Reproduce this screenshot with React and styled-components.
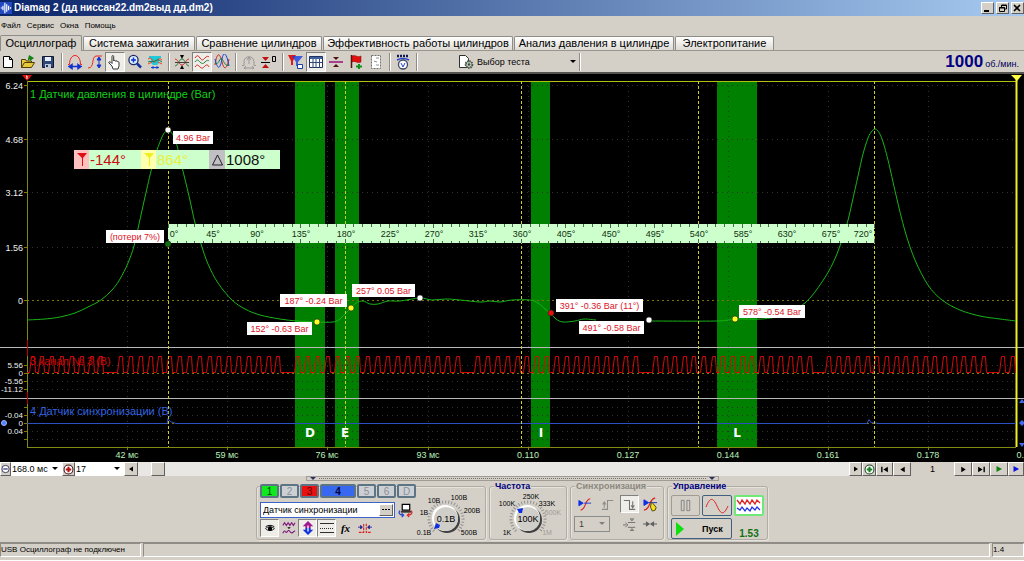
import { useState } from "react";
import styled, { createGlobalStyle, css } from "styled-components";

const GlobalStyle = createGlobalStyle`
  * {
    box-sizing: border-box;
  }
  body {
    margin: 0;
    background: #d4d0c8;
    font-family: "Liberation Sans", Arial, sans-serif;
    font-size: 9px;
    color: #000;
  }
  button, input, select {
    font: inherit;
    color: inherit;
    margin: 0;
    padding: 0;
    border-radius: 0;
  }
`;

const raised = css`
  border: 1px solid;
  border-color: #fff #606060 #606060 #fff;
  background: #d4d0c8;
`;

const Window = styled.div`
  display: flex;
  flex-direction: column;
  overflow: hidden;
`;

/* title and menu */

const TitleBar = styled.header`
  display: flex;
  align-items: center;
  gap: 2px;
  height: 16px;
  background: linear-gradient(to right, #0a246a, #a6caf0);
`;

const Title = styled.h1`
  flex: 1;
  margin: 0;
  font-size: 10px;
  line-height: 16px;
  font-weight: bold;
  color: #fff;
`;

const WindowButton = styled.button`
  ${raised}
  display: flex;
  width: 13px;
  height: 12px;
`;

const Menu = styled.nav`
  display: flex;
  gap: 6px;
  height: 19px;
  padding-left: 1px;
`;

const MenuItem = styled.button`
  border: 0;
  background: none;
  font-size: 8px;
  line-height: 20px;
`;

const Tabs = styled.nav`
  display: flex;
  align-items: flex-end;
  gap: 1px;
  height: 16px;
  border-bottom: 1px solid #9a968e;
`;

const Tab = styled.button`
  height: ${(props) => (props.$active ? 16 : 14)}px;
  width: ${(props) => props.$width}px;
  margin-bottom: ${(props) => (props.$active ? -1 : 0)}px;
  border: 1px solid #8c8c88;
  border-bottom: 0;
  border-radius: 2px 2px 0 0;
  background: ${(props) => (props.$active ? "#d4d0c8" : "linear-gradient(#fff, #dedbd4)")};
  font-size: 11px;
  line-height: 13px;
  white-space: nowrap;
`;

/* toolbar */

const Toolbar = styled.div`
  display: flex;
  align-items: center;
  height: 23px;
  margin-left: -2px;
  border-bottom: 2px solid #55534f;
`;

const ToolButton = styled.button`
  display: flex;
  align-items: center;
  justify-content: center;
  width: 20px;
  height: 20px;
  border: 1px solid;
  border-color: ${(props) => (props.$on ? "#808080 #fff #fff #808080" : "transparent")};
  background: ${(props) => (props.$on ? "#efede8" : "none")};
`;

const Separator = styled.span`
  width: 4px;
  height: 18px;
  margin-left: 3px;
  border-left: 1px solid #8f8c85;
  box-shadow: inset 1px 0 #fff;
`;

const TestButton = styled.button`
  display: flex;
  align-items: center;
  gap: 3px;
  width: 118px;
  margin-left: 38px;
  border: 0;
  background: none;
  span {
    flex: 1;
    text-align: left;
  }
`;

const Rpm = styled.output`
  margin-left: auto;
  padding-right: 5px;
  font-size: 9px;
  color: #00005c;
  b {
    margin-right: 2px;
    font-size: 17px;
    color: #000080;
  }
`;

/* chart */

const ChartSvg = styled.svg`
  display: block;
  width: 100%;
  height: auto;
  background: #000;
`;

const AxisText = styled.text`
  font-size: ${(props) => (props.$small ? 8 : 9)}px;
  fill: ${(props) => props.$color || "#f0f0f0"};
  text-anchor: ${(props) => props.$anchor || "end"};
`;

const ChannelText = styled.text`
  font-size: 11px;
  fill: ${(props) => props.$color};
`;

const TagText = styled.text`
  font-size: 9px;
  fill: #dc1428;
  text-anchor: middle;
`;

const RulerText = styled.text`
  font-size: 9px;
  fill: #103010;
  text-anchor: middle;
`;

const ReadoutText = styled.text`
  font-size: 15px;
  fill: ${(props) => props.$color};
`;

const BandText = styled.text`
  font-family: "DejaVu Sans", sans-serif;
  font-size: 12px;
  font-weight: bold;
  fill: #fff;
  text-anchor: middle;
`;

/* scroll row */

const ScrollRow = styled.div`
  display: flex;
  height: 14px;
`;

const SmallButton = styled.button`
  ${raised}
  display: flex;
  align-items: center;
  justify-content: center;
  width: ${(props) => props.$width}px;
  flex: none;
`;

const Combo = styled.label`
  position: relative;
  flex: none;
  width: ${(props) => props.$width}px;
  height: ${(props) => props.$height || 14}px;
  background: ${(props) => (props.$gray ? "#d4d0c8" : "#fff")};
  border: ${(props) => (props.$gray ? "1px solid #8c8c88" : "0")};
  select {
    display: block;
    width: 100%;
    height: 100%;
    padding-left: ${(props) => (props.$gray ? 4 : 1)}px;
    border: 0;
    background: none;
    appearance: none;
    font-size: 9px;
  }
  svg {
    position: absolute;
    right: 4px;
    top: 50%;
    margin-top: -2px;
    pointer-events: none;
  }
`;

const Track = styled.div`
  flex: 1;
  display: flex;
  padding-left: 13px;
  background: #e9e7e3;
`;

const Thumb = styled.span`
  ${raised}
  width: 14px;
`;

const PageNumber = styled.output`
  width: 43px;
  line-height: 14px;
  text-align: center;
`;

/* control panels */

const Controls = styled.main`
  display: flex;
  flex-direction: column;
  align-items: center;
  height: 66px;
`;

const Splitter = styled.div`
  display: flex;
  align-items: center;
  justify-content: space-between;
  width: 413px;
  height: 5px;
  padding: 0 3px;
  border: 1px solid #a09c94;
`;

const Dots = styled.i`
  flex: 1;
  margin: 0 3px;
  border-top: 1px dotted #707070;
`;

const Panels = styled.div`
  display: flex;
  align-items: stretch;
  gap: 3px;
  height: 58px;
  margin-top: 2px;
`;

const Group = styled.fieldset`
  position: relative;
  width: ${(props) => props.$width}px;
  height: 54px;
  margin: 3px 0 0;
  padding: 0 3px;
  border: 1px solid #b0aca4;
  border-radius: 3px;
  box-shadow: inset 1px 1px #e6e3dd, 1px 1px #e6e3dd;
`;

const GroupTitle = styled.h2`
  position: absolute;
  top: -6px;
  left: 4px;
  margin: 0;
  padding: 0 1px;
  background: #d4d0c8;
  font-size: 9px;
  line-height: 10px;
  font-weight: bold;
  color: ${(props) => props.$color || "#000080"};
`;

const ChannelGroup = styled(Group)`
  display: flex;
`;

const ChannelColumn = styled.div`
  display: flex;
  flex-direction: column;
  width: 156px;
`;

const Channels = styled.div`
  display: flex;
  gap: 1px;
  height: 14px;
  margin-top: -3px;
`;

const ChannelButton = styled.button`
  width: ${(props) => (props.$wide ? 36 : 19)}px;
  border: 2px solid #5c7484;
  border-radius: 2px;
  background: ${(props) => props.$color};
  color: ${(props) => props.$text};
  font-size: 10px;
  line-height: 9px;
  font-weight: ${(props) => (props.$wide ? "bold" : "normal")};
`;

const SensorRow = styled.div`
  display: flex;
  align-items: center;
  gap: 3px;
  margin-top: 4px;
`;

const SensorBox = styled.div`
  display: flex;
  width: 135px;
  height: 16px;
  padding: 1px;
  border: 1px solid #3c64c8;
  background: #fff;
  input {
    flex: 1;
    min-width: 0;
    padding-left: 1px;
    border: 0;
    background: none;
    font-size: 9px;
  }
`;

const ToolRow = styled.div`
  display: flex;
  margin-top: 1px;
`;

const ModeButton = styled(ToolButton)`
  width: 19px;
  height: 18px;
`;

const FunctionMark = styled.i`
  font-family: "Liberation Serif", serif;
  font-size: 11px;
  font-weight: bold;
`;

const DialSvg = styled.svg`
  display: block;
  flex: none;
`;

const DialText = styled.text`
  font-size: ${(props) => (props.$main ? 9 : 7)}px;
  fill: ${(props) => (props.$off ? "#a09c94" : "#000")};
  text-anchor: middle;
`;

const SyncGrid = styled.div`
  display: grid;
  grid-template-columns: 22px 22px 22px 20px;
  grid-template-rows: 22px 18px;
  align-items: center;
  justify-items: center;
  padding-top: 6px;
`;

const SyncCombo = styled(Combo)`
  grid-column: span 2;
  justify-self: start;
  color: #404040;
`;

const RunGrid = styled.div`
  display: grid;
  grid-template-columns: 29px 30px 30px;
  gap: 2px;
  padding-top: 8px;
`;

const RunButton = styled.button`
  display: flex;
  align-items: center;
  justify-content: center;
  gap: 18px;
  grid-column: span ${(props) => props.$span || 1};
  height: 21px;
  padding-right: ${(props) => (props.$span ? 4 : 0)}px;
  border: ${(props) => (props.$lit ? 2 : 1)}px solid ${(props) => props.$edge};
  border-radius: 2px;
  background: ${(props) => props.$fill || "#d4d0c8"};
  font-weight: bold;
  font-size: 9px;
`;

const Ratio = styled.output`
  align-self: end;
  justify-self: center;
  font-size: 10px;
  line-height: 10px;
  font-weight: bold;
  color: #107010;
`;

const Status = styled.footer`
  display: flex;
  gap: 2px;
  height: 15px;
  border-top: 1px solid #8f8c85;
`;

const Cell = styled.span`
  flex: ${(props) => (props.$width ? "none" : 1)};
  width: ${(props) => props.$width || 0}px;
  border: 1px solid;
  border-color: #8f8c85 #fff #fff #8f8c85;
  font-size: 8px;
  line-height: 12px;
  white-space: nowrap;
`;

const BottomEdge = styled.div`
  height: 4px;
  border-bottom: 1px solid #fff;
`;

// 16x16 drawings for the buttons
const icons = {
  logo: <><path fill="#2048c0" d="M0 0h16v16H0z" /><path stroke="#fff" fill="none" strokeWidth="1.6" d="M1 8h2M4 5v6M6.500 1v14M9 3v10M11.500 5v6M14 7v2" /></>,
  fresh: <path fill="#fff" stroke="#000" d="M3.500 2.500h6l3 3v8h-9zM9.500 2.500v3h3" />,
  open: <><path fill="#e8c840" stroke="#504000" d="M1.500 13.500v-8h4l1 1.500h5v2M1.500 13.500l3-5h10l-3 5z" /><path fill="#108010" d="M9 1l5 3-4 3V5L8 7V5z" /></>,
  save: <><path fill="#304878" stroke="#101830" d="M2.500 2.500h11v11h-11z" /><path fill="#e8f0ff" d="M5 3h6v4H5z" /><path fill="#c0c8d8" d="M5 10h6v4H5z" /><path fill="#203060" d="M6 11h2v2H6z" /></>,
  arch: <><path fill="none" stroke="#f02020" d="M1 10.500h1.500C2.500 5 5 1.500 8 1.500s5.500 3.500 5.500 9H15" /><path stroke="#1030d0" strokeWidth="1.500" fill="#1030d0" d="M3 12.500h10M5 10.500l-3 2 3 2zM11 10.500l3 2-3 2z" /></>,
  rise: <><path fill="none" stroke="#f02020" d="M1 14c7 0 3-11 8-12h6" /><path fill="#1030d0" stroke="#1030d0" d="M12 4v8M10 6l2-3 2 3zM10 11l2 3 2-3z" /></>,
  hand: <path fill="#fff" stroke="#202020" strokeWidth=".9" d="M6 15l-1-3-3-3c-.8-1.500 1-1.500 2-.5l1 1V2.500c0-1.300 1.700-1.300 1.700 0V7c.2-1 1.700-.9 1.800.3.300-1 1.800-.7 1.800.5.500-.7 1.700-.3 1.700 1V12l-1 3z" />,
  zoomIn: <><circle cx="6.500" cy="6" r="4.600" fill="#d8f0ff" stroke="#202860" strokeWidth="1.300" /><path stroke="#1030d0" strokeWidth="1.500" d="M4 6h5M6.500 3.500v5" /><path stroke="#1030a0" strokeWidth="2.500" d="M10 9.500l4 4" /></>,
  sphere: <><path fill="#20c8d8" d="M2 2h12v2l-2 1v4l-2 2H6L4 9V5L2 4z" /><path stroke="#f04020" fill="none" d="M1 5c4-3 5 4 7 3s4-5 7-2M1 10l4-2M15 10l-4-2" /><path stroke="#108050" fill="none" d="M1 8c3-2 4 1 7-1s4-1 7 1" /><path stroke="#1040d0" fill="none" d="M4 13.500h8M6 12v3M10 12v3" /></>,
  cross: <><path stroke="#208040" fill="none" d="M1 12c3 0 4-7 7-7s4 7 7 7" /><path stroke="#e03030" fill="none" d="M1 5c3 0 4 6 7 6s4-6 7-6" /><path stroke="#404040" d="M1 8.500h14" /><path fill="#000" d="M8 5L6 1h4zM8 11l-2 4h4z" /></>,
  waves: <g fill="none"><path stroke="#d02020" d="M1 4c2-3 3-3 5 0s3 2 5 0 3-2 4-1" /><path stroke="#208040" d="M1 8c2-3 3-2 5 0s3 2 5 0 3-2 4-1" /><path stroke="#d02020" d="M1 13c2-3 3-2 5 0s3 1 5-1 3-1 4 1" /></g>,
  overlap: <g fill="none"><path stroke="#d02020" d="M1 11C3-3 6-1 8 8s5 7 7-3" /><path stroke="#2040e0" d="M1 5c3 12 5 10 7 0s5-4 7 7" /><path stroke="#108040" d="M1 9c3 4 5-7 7-4s4 8 7 6" /></g>,
  auto: <path fill="none" stroke="#989898" d="M1 11.500h2V8c0-7 10-7 10 0v3.500h2M8 3v7M6 6l2-3 2 3M3 14h10M5 12l-2 2 2 1M11 12l2 2-2 1" />,
  level: <><path fill="#c01010" d="M1 3h7L4.500 7z" /><path stroke="#000" fill="none" d="M0 8.500h9M11.500 2.500h3v5h-3z" /><path fill="#c01010" d="M4.500 10l3.500 4H1z" /></>,
  funnel: <><path fill="#e01818" d="M0 1h8L5 7v4H3V7z" /><path fill="#1840e0" d="M4 2h11L10 8v4H8V8z" opacity=".8" /><path fill="#fff" stroke="#1840a0" d="M9.500 10.500h5v4h-5z" /></>,
  table: <><path fill="#fff" stroke="#203060" d="M1.500 2.500h13v11h-13z" /><path fill="#4060a0" d="M2 3h12v2H2z" /><path stroke="#304878" d="M5 5v9M8 5v9M11.500 5v9M2 8.500h12" /></>,
  line: <><path stroke="#a01880" strokeWidth="1.600" d="M1 8h14" /><path fill="#501010" d="M8 6L5 3h6z" /><path fill="#501010" d="M8 10l-3 3h6z" /></>,
  flag: <><path stroke="#501010" strokeWidth="1.500" d="M3.500 1v13" /><path fill="#e01010" stroke="#800" strokeWidth=".5" d="M4 2c3-2 5 2 9 0v6c-4 2-6-2-9 0z" /><path stroke="#109020" strokeWidth="2" d="M8 12.500h6M11 10v5" /></>,
  report: <><path fill="#fff" stroke="#707070" strokeDasharray="2 1" d="M3.500 1.500h9v13h-9z" /><path stroke="#909090" d="M8 4h3M6 7l3 1M8 11h3" /></>,
  meter: <><path stroke="#101850" strokeWidth="2.500" strokeDasharray="2 1" d="M2 2h12" /><path stroke="#2040d0" strokeWidth="1.500" d="M2 6c4-2 8-2 12 0" fill="none" /><circle cx="8" cy="10.500" r="4.500" fill="#fff" stroke="#404860" strokeWidth="1.300" /><path stroke="#2040d0" fill="none" d="M6 9l2 4 2-4" /></>,
  test: <><path fill="#fff" stroke="#303030" d="M1.500 1.500h6l3 3v9h-9z" /><circle cx="11" cy="10.500" r="3.300" fill="#d0d4cc" stroke="#405040" strokeWidth="2" strokeDasharray="1.500 .7" /><circle cx="11" cy="10.500" r="1.300" fill="#405040" /></>,
  minus: <><circle cx="8" cy="8" r="6.500" fill="#fff" stroke="#202040" strokeWidth="1.500" /><path stroke="#202080" strokeWidth="2" d="M4 8h8" /></>,
  plusRed: <><circle cx="8" cy="8" r="6.500" fill="#fff" stroke="#401010" strokeWidth="1.500" /><path stroke="#b01010" strokeWidth="3" d="M4 8h8M8 4v8" /></>,
  plusGreen: <><circle cx="8" cy="8" r="6.500" fill="#fff" stroke="#204020" strokeWidth="1.500" /><path stroke="#108020" strokeWidth="3" d="M4 8h8M8 4v8" /></>,
  left: <path d="M12 3v10L4 8z" />,
  right: <path d="M4 3v10l8-5z" />,
  first: <path d="M2 3h2.500v10H2zM14 3v10L6 8z" />,
  last: <path d="M2 3v10l8-5zM11.500 3H14v10h-2.500z" />,
  play: <path d="M3 2v12l11-6z" />,
  computer: <><path fill="#fff" stroke="#000" strokeWidth="1.300" d="M4.500 1.500h8v6h-8zM3 9.500h11" /><path fill="none" stroke="#2040d0" strokeWidth="1.300" d="M2 8c-2 3 0 5 4 5M4 11l2 2-2 2" /><path fill="none" stroke="#e02020" strokeWidth="1.300" d="M14 8c2 3 0 5-4 5M12 11l-2 2 2 2" /></>,
  eye: <><path fill="#fff" stroke="#000" strokeWidth="1.500" d="M1 9c3-4 10-4 14 0-4 4-11 4-14 0zM1 6c4-3 10-3 14 0" /><circle cx="8" cy="9" r="3.500" /></>,
  zigzag: <><path fill="none" stroke="#801880" strokeWidth="1.300" d="M1 5l2-3 2 3 2-3 2 3 2-3 2 3 2-3M1 14c2-5 3-1 4-1s2-4 4-1 3 1 6-1" /><path d="M6 7h4l-2 2z" /></>,
  updown: <><path fill="#a01890" d="M8 0l6 6h-3v2H5V6H2z" /><path fill="#1030e0" d="M8 16l6-6h-3V8H5v2H2z" /><path stroke="#fff" strokeWidth="1.500" d="M8 5v7" /></>,
  pulses: <><path fill="none" stroke="#e02020" strokeWidth="1.300" d="M1 13h5.500V3M9.500 3v10H15" strokeDasharray="3 1" /><path fill="#202090" stroke="#202090" d="M0 7h4M5 7L3 5v4zM12 7h4M11 7l2-2v4z" /></>,
  syncA: <><path fill="none" stroke="#e02020" strokeWidth="1.300" d="M3 15c7-1 4-12 11-13" /><path fill="#1030e0" stroke="#1030e0" d="M7 7h8M1 4l5 3-5 3z" /></>,
  syncUp: <path fill="none" stroke="#8c8c88" strokeWidth="1.300" d="M1 14h7V3h7M4 12V6M2 8l2-3 2 3" />,
  syncDown: <path fill="none" stroke="#707070" strokeWidth="1.300" d="M1 3h7v11h7M12 4v7M10 9l2 3 2-3" />,
  syncB: <><path fill="none" stroke="#e02020" strokeWidth="1.300" d="M1 14c8-1 4-11 12-13" /><path fill="#1030e0" stroke="#1030e0" d="M6 6h9M1 3l5 3-5 3z" /><path fill="#f0e020" stroke="#504000" d="M9 5l5 6-1 3-3 1-2-4z" /></>,
  spread: <path fill="none" stroke="#606060" d="M0 8.500h4M3 6l3 2.500L3 11M6 5.500h9M6 11.500h9M9 1h4l-2 2.500zM9 15.500h4l-2-2.500z" />,
  squeeze: <path fill="#606060" stroke="#606060" strokeWidth="1.300" d="M0 8h4M4 6l3 2-3 2zM16 8h-4M12 6l-3 2 3 2z" />,
  pause: <path fill="#d4d0c8" stroke="#808080" d="M3.500 2.500h3v11h-3zM9.500 2.500h3v11h-3z" />,
};

const Icon = ({ name, size = 16, color = "#000" }) => (
  <svg width={size} height={size} viewBox="0 0 16 16" fill={color} aria-hidden="true">
    {icons[name]}
  </svg>
);

const Caret = ({ color = "#000" }) => (
  <svg width="6" height="4" viewBox="0 0 6 4" aria-hidden="true">
    <path fill={color} d="M0 0h6L3 3z" />
  </svg>
);

const tabs = [
  ["Осциллограф", 82],
  ["Система зажигания", 112],
  ["Сравнение цилиндров", 126],
  ["Эффективность работы цилиндров", 190],
  ["Анализ давления в цилиндре", 160],
  ["Электропитание", 99],
];

const tools = [
  "fresh", "open", "save", "|",
  "arch", "rise", "hand", "zoomIn", "sphere", "|",
  "cross", "waves", "overlap", "|",
  "auto", "level", "|",
  "funnel", "table", "line", "flag", "report", "|",
  "meter", "|",
];

const channels = [
  ["1", "#10e820", "#004800"],
  ["2", "#ccd0d4", "#8c9094"],
  ["3", "#e81010", "#600000"],
  ["4", "#3868f0", "#000038"],
  ["5", "#ccd0d4", "#8c9094"],
  ["6", "#ccd0d4", "#8c9094"],
  ["D", "#ccd0d4", "#8c9094"],
];

const pressureRuns = [
  [[27, 320], [45, 319], [60, 317], [75, 313], [88, 307], [101, 300], [112, 290], [120, 279], [128, 263], [134, 246],
    [139, 224], [145, 197], [152, 167], [157, 150], [162, 137], [165, 132], [168, 130], [171, 132], [176, 142], [182, 167],
    [189, 196], [195, 223], [201, 244], [208, 264], [218, 283], [232, 300], [245, 309], [260, 315], [280, 319], [297, 321],
    [317, 322], [333, 322], [340, 319], [346, 313], [351, 308], [356, 303], [363, 301], [370, 304], [378, 304], [388, 301],
    [400, 301], [420, 298], [432, 300], [446, 299], [460, 300], [480, 302], [490, 301], [500, 302], [512, 300], [530, 300],
    [538, 303], [545, 309], [550, 313], [556, 319], [563, 322], [575, 321], [584, 319], [596, 320]],
  [[650, 321], [717, 321], [735, 319], [762, 319], [782, 315], [805, 303], [822, 282], [833, 263], [841, 243], [847, 224],
    [852, 203], [858, 176], [863, 154], [868, 138], [872, 131], [875, 129], [878, 131], [882, 139], [888, 160], [896, 195],
    [905, 231], [915, 260], [928, 285], [942, 300], [960, 310], [980, 316], [1000, 319], [1016, 321]],
];

// Catmull-Rom through the samples
const smooth = (points) => {
  let d = `M${points[0]}`;
  for (let i = 0; i < points.length - 1; i++) {
    const a = points[i - 1] || points[i];
    const b = points[i];
    const c = points[i + 1];
    const e = points[i + 2] || c;
    d += `C${b[0] + (c[0] - a[0]) / 6} ${b[1] + (c[1] - a[1]) / 6} ${c[0] - (e[0] - b[0]) / 6} ${c[1] - (e[1] - b[1]) / 6} ${c}`;
  }
  return d;
};

// 17 teeth and one missing tooth for each turn of the wheel
const wheelStarts = [-60, 117, 294, 474, 652, 825, 999, 1176];
const teeth = () => {
  let d = "M27 372.5";
  for (let i = 0; i < wheelStarts.length - 1; i++) {
    const step = (wheelStarts[i + 1] - wheelStarts[i]) / 18;
    for (let k = 0; k < 17; k++) {
      const x = Math.round(wheelStarts[i] + k * step);
      if (x > 27 && x < 1010) d += `H${x}.5L${x + 2}.5 356.5H${x + 5}.5L${x + 6}.5 372.5`;
    }
  }
  return d + "H1016";
};

const bands = [["D", 295, 30], ["E", 335, 24], ["I", 531, 19], ["L", 717, 40]];

const gridX = [
  [127, "42 мс"], [227, "59 мс"], [327, "76 мс"], [428, "93 мс"], [528, "0.110"],
  [628, "0.127"], [728, "0.144"], [828, "0.161"], [928, "0.178"],
];

const gridY = [
  [85, "6.24"], [139, "4.68"], [192, "3.12"], [247, "1.56"], [300, "0"],
  [365, "5.56"], [373, "0"], [381, "-5.56"], [389, "-11.12"],
  [415, "-0.04"], [423, "0"], [431, "0.04"], [407, ""], [439, ""],
];

const tags = [
  ["4.96 Bar", 173, 131, 40], ["(потери 7%)", 106, 230, 58], ["187° -0.24 Bar", 280, 294, 67],
  ["152° -0.63 Bar", 247, 322, 65], ["257° 0.05 Bar", 352, 284, 63], ["391° -0.36 Bar (11°)", 556, 299, 87],
  ["491° -0.58 Bar", 579, 321, 65], ["578° -0.54 Bar", 739, 305, 66],
];

const markers = [
  [168, 130, "#fff"], [168, 244, "#107010"], [317, 322, "#ffff20"], [351, 308, "#ffff20"],
  [420, 298, "#fff"], [551, 313, "#e01010"], [649, 320, "#fff"], [735, 319, "#ffff20"],
];

function Chart() {
  const ticks = [];
  for (let i = 0; i <= 80; i++) {
    const x = 168 + Math.round(i * 8.83);
    ticks.push(i % 5 === 0 ? `M${x}.5 224v4M${x}.5 243v-4` : `M${x}.5 224v3M${x}.5 243v-2`);
  }
  return (
    <ChartSvg viewBox="0 74 1024 388" role="img" aria-label="Осциллограмма">
      {bands.map(([name, x, w]) => (
        <rect key={name} x={x} y="81" width={w} height="366" fill="#008000" />
      ))}
      {gridY.map(([y, label], i) => (
        <g key={i}>
          <path
            d={`M27 ${y}.5H1016`}
            stroke={label === "0" ? "#77770a" : "#303030"}
            strokeDasharray={label === "0" ? "2 3" : "1 4"}
          />
          <path d={`M24 ${y}.5h3`} stroke="#808000" />
          <AxisText x="23" y={y > 350 ? y + 3 : y + 4} $small={y > 350}>{label}</AxisText>
        </g>
      ))}
      {gridX.map(([x, label]) => (
        <g key={x}>
          <path d={`M${x}.5 81V447`} stroke="#303030" strokeDasharray="1 4" />
          <path d={`M${x}.5 447v3`} stroke="#808000" />
          <AxisText x={x} y="458" $anchor="middle" $color="#b8f0b8">{label}</AxisText>
        </g>
      ))}
      <AxisText x="1024" y="458" $color="#b8f0b8">0.</AxisText>
      <path d="M0 347.500H1024M0 398.500H1024" stroke="#b8b8b8" />
      <path d="M27 81.500H1016" stroke="#b0c010" />
      <path d="M27.500 81V447M27 447.500H1016" stroke="#808a10" />
      <path d="M27.500 340v16M27.500 392v12" stroke="#c00000" />
      <path d="M1016.500 78V447" stroke="#f0f020" strokeWidth="2" />
      <path d={teeth()} fill="none" stroke="#d80808" />
      <path d="M27 423.500H167l1-5 2 3 6 2H867l2-4 2 3 8 1H1016" fill="none" stroke="#2c50c0" />
      {pressureRuns.map((run, i) => (
        <path key={i} d={smooth(run)} fill="none" stroke="#18b418" />
      ))}
      <path
        d="M168.500 81V447M345.500 81V447M521.500 81V447M698.500 81V447M874.500 81V447"
        stroke="#d0d020"
        strokeDasharray="3 2"
      />

      <ChannelText x="30" y="98" $color="#10d018">1 Датчик давления в цилиндре (Bar)</ChannelText>
      <ChannelText x="30" y="365" $color="#c80808">3 канал № 3 (В)</ChannelText>
      <ChannelText x="30" y="415" $color="#3464e0">4 Датчик синхронизации (В)</ChannelText>

      <rect x="74" y="150" width="206" height="19" fill="#ccffcc" />
      <rect x="74" y="150" width="15" height="19" fill="#ffc0c0" />
      <rect x="141" y="150" width="15" height="19" fill="#ffffb0" />
      <rect x="209" y="150" width="16" height="19" fill="#c0c0c4" />
      <path d="M77 153h10l-4 5v8h-1v-8z" fill="#e01010" />
      <path d="M144 153h10l-4 5v8h-1v-8z" fill="#f0f020" />
      <path d="M217.500 155l5 10h-10z" fill="none" stroke="#202020" />
      <ReadoutText x="90" y="165" $color="#c81010">-144°</ReadoutText>
      <ReadoutText x="157" y="165" $color="#e8f040">864°</ReadoutText>
      <ReadoutText x="226" y="165" $color="#101010">1008°</ReadoutText>

      <rect x="168" y="224" width="706" height="19" fill="#ccffcc" />
      <path d={ticks.join("")} stroke="#506850" />
      {Array.from({ length: 17 }, (_, i) => (
        <RulerText key={i} x={i === 0 ? 174 : i === 16 ? 863 : 169 + Math.round(i * 44.15)} y="237">
          {i * 45}°
        </RulerText>
      ))}

      {tags.map(([label, x, y, w]) => (
        <g key={label}>
          <rect x={x} y={y} width={w} height="13" fill="#fff" />
          <TagText x={x + w / 2} y={y + 10}>{label}</TagText>
        </g>
      ))}
      {markers.map(([x, y, color]) => (
        <circle key={x + "-" + y} cx={x} cy={y} r="3" fill={color} stroke="#202020" strokeWidth=".6" />
      ))}
      {bands.map(([name, x, w]) => (
        <BandText key={name} x={name === "I" || name === "E" ? x + 10 : x + w / 2} y="437">{name}</BandText>
      ))}

      <path d="M22 75h10l-5 6z" fill="#e01010" />
      <path d="M26 76h1v3" fill="none" stroke="#fff" />
      <path d="M1011 75h11l-5 6z" fill="#ffff40" />
      <circle cx="4" cy="423" r="2.500" fill="#5080ff" stroke="#a0b8ff" />
      <path d="M1019 403l3-4 3 4zM1019 423l3-3 3 3-3 3zM1019 443h6l-3 4z" fill="#4068f0" />
    </ChartSvg>
  );
}

function Dial({ width, cx, cy, value, pointer, marks }) {
  return (
    <DialSvg width={width} height="50" viewBox={`0 0 ${width} 50`} role="img" aria-label={value}>
      <path
        d={`M${cx - 12} ${cy + 12}A17 17 0 1 1 ${cx + 12} ${cy + 12}`}
        fill="none"
        stroke="#909090"
        strokeWidth="3"
        strokeDasharray="1 2"
      />
      <circle cx={cx + 1} cy={cy + 1} r="13" fill="#404040" />
      <circle cx={cx - 1} cy={cy - 1} r="13" fill="#fff" />
      <circle cx={cx} cy={cy} r="12" fill="#d0cec8" />
      <path d={pointer} fill="#1030e0" />
      {marks.map(([label, x, y, off]) => (
        <DialText key={label} x={x} y={y} $off={off}>{label}</DialText>
      ))}
      <DialText x={cx} y={cy + 3} $main>{value}</DialText>
    </DialSvg>
  );
}

export default function App() {
  const [activeTab, setActiveTab] = useState("Осциллограф");
  const [pressed, setPressed] = useState(["hand", "waves", "table"]);
  const [sensor, setSensor] = useState("Датчик синхронизации");

  const toggle = (name) =>
    setPressed((list) => (list.includes(name) ? list.filter((n) => n !== name) : [...list, name]));

  return (
    <Window>
      <GlobalStyle />
      <TitleBar>
        <Icon name="logo" size={12} />
        <Title>Diamag 2 (дд ниссан22.dm2выд дд.dm2)</Title>
        <WindowButton aria-label="Свернуть">
          <svg width="11" height="10"><path d="M2 7h5v2H2z" /></svg>
        </WindowButton>
        <WindowButton aria-label="Восстановить">
          <svg width="11" height="10"><path d="M4.500 4V2h5v4H8M2.500 4.500h5v4h-5zM2 5h6M4 2.500h6" fill="none" stroke="#000" /></svg>
        </WindowButton>
        <WindowButton aria-label="Закрыть">
          <svg width="11" height="10"><path d="M2 2l6 6M8 2L2 8" stroke="#000" strokeWidth="1.600" /></svg>
        </WindowButton>
      </TitleBar>

      <Menu>
        {["Файл", "Сервис", "Окна", "Помощь"].map((item) => (
          <MenuItem key={item}>{item}</MenuItem>
        ))}
      </Menu>

      <Tabs>
        {tabs.map(([name, width]) => (
          <Tab key={name} $width={width} $active={name === activeTab} onClick={() => setActiveTab(name)}>
            {name}
          </Tab>
        ))}
      </Tabs>

      <Toolbar>
        {tools.map((name, i) =>
          name === "|" ? (
            <Separator key={i} />
          ) : (
            <ToolButton key={i} aria-label={name} $on={pressed.includes(name)} onClick={() => toggle(name)}>
              <Icon name={name} />
            </ToolButton>
          )
        )}
        <TestButton>
          <Icon name="test" />
          <span>Выбор теста</span>
          <Caret />
        </TestButton>
        <Separator />
        <Rpm><b>1000</b>об./мин.</Rpm>
      </Toolbar>

      <Chart />

      <ScrollRow>
        <SmallButton $width={11} aria-label="Сжать"><Icon name="minus" size={10} /></SmallButton>
        <Combo $width={51}>
          <select aria-label="Развёртка"><option>168.0 мс</option></select>
          <Caret />
        </Combo>
        <SmallButton $width={13} aria-label="Растянуть"><Icon name="plusRed" size={11} /></SmallButton>
        <Combo $width={49}>
          <select aria-label="Масштаб"><option>17</option></select>
          <Caret />
        </Combo>
        <SmallButton $width={14} aria-label="Влево"><Icon name="left" size={8} /></SmallButton>
        <Track><Thumb /></Track>
        <SmallButton $width={13} aria-label="Вправо"><Icon name="right" size={8} /></SmallButton>
        <SmallButton $width={14} aria-label="Добавить"><Icon name="plusGreen" size={11} /></SmallButton>
        <SmallButton $width={17} aria-label="В начало"><Icon name="first" size={9} /></SmallButton>
        <SmallButton $width={18} aria-label="Назад"><Icon name="left" size={9} /></SmallButton>
        <PageNumber>1</PageNumber>
        <SmallButton $width={18} aria-label="Вперёд"><Icon name="right" size={9} /></SmallButton>
        <SmallButton $width={18} aria-label="В конец"><Icon name="last" size={9} /></SmallButton>
        <SmallButton $width={18} aria-label="Воспроизвести"><Icon name="play" size={8} color="#108010" /></SmallButton>
        <SmallButton $width={16} aria-label="Непрерывно"><Icon name="play" size={8} color="#1010e0" /></SmallButton>
      </ScrollRow>

      <Controls>
        <Splitter><Caret color="#303060" /><Dots /><Caret color="#303060" /></Splitter>
        <Panels>
          <ChannelGroup $width={230}>
            <ChannelColumn>
              <Channels>
                {channels.map(([name, color, text]) => (
                  <ChannelButton key={name} $color={color} $text={text} $wide={name === "4"}>{name}</ChannelButton>
                ))}
              </Channels>
              <SensorRow>
                <SensorBox>
                  <input aria-label="Датчик" value={sensor} onChange={(e) => setSensor(e.target.value)} />
                  <SmallButton $width={14} aria-label="Выбрать датчик">
                    <svg width="8" height="2"><path d="M0 0h2v1H0zM3 0h2v1H3zM6 0h2v1H6z" /></svg>
                  </SmallButton>
                </SensorBox>
                <Icon name="computer" size={15} />
              </SensorRow>
              <ToolRow>
                <ModeButton $on aria-label="Показать"><Icon name="eye" size={10} /></ModeButton>
                <ModeButton aria-label="Фильтр"><Icon name="zigzag" size={14} /></ModeButton>
                <ModeButton $on aria-label="Инверсия"><Icon name="updown" size={14} /></ModeButton>
                <ModeButton $on aria-label="Сетка">
                  <svg width="14" height="14"><path d="M0 2.500h14M0 11.500h14" stroke="#303030" /><path d="M0 7.500h14" stroke="#303030" strokeDasharray="1 1" /></svg>
                </ModeButton>
                <ModeButton aria-label="Функция"><FunctionMark>fx</FunctionMark></ModeButton>
                <ModeButton aria-label="Импульсы"><Icon name="pulses" size={14} /></ModeButton>
              </ToolRow>
            </ChannelColumn>
            <Dial
              width={66}
              cx={30}
              cy={32}
              value="0.1В"
              pointer="M20 36l4 2-1 3-5 1z"
              marks={[["0.1В", 8, 48], ["1В", 8, 28], ["10В", 18, 16], ["100В", 43, 13], ["200В", 56, 26], ["500В", 53, 48]]}
            />
          </ChannelGroup>

          <Group $width={78}>
            <GroupTitle>Частота</GroupTitle>
            <Dial
              width={70}
              cx={35}
              cy={32}
              value="100K"
              pointer="M24 22l6-1-1 5-3 0z"
              marks={[["1K", 14, 48], ["100K", 14, 19], ["250K", 38, 12], ["333K", 54, 19], ["500K", 60, 28, true], ["1M", 54, 48, true]]}
            />
          </Group>

          <Group $width={94}>
            <GroupTitle $color="#8c8880">Синхронизация</GroupTitle>
            <SyncGrid>
              <Icon name="syncA" size={14} />
              <Icon name="syncUp" size={13} />
              <ModeButton $on aria-label="По спаду"><Icon name="syncDown" size={13} /></ModeButton>
              <Icon name="syncB" size={15} />
              <SyncCombo $width={36} $height={16} $gray>
                <select aria-label="Канал синхронизации"><option>1</option></select>
                <Caret color="#808080" />
              </SyncCombo>
              <Icon name="spread" size={13} />
              <Icon name="squeeze" size={14} />
            </SyncGrid>
          </Group>

          <Group $width={101}>
            <GroupTitle>Управление</GroupTitle>
            <RunGrid>
              <RunButton $edge="#a09c94" aria-label="Пауза"><Icon name="pause" size={15} /></RunButton>
              <RunButton $edge="#406080" aria-label="Синус">
                <svg width="24" height="16"><path d="M1 9C5-1 8-1 12 8s7 9 11 0" fill="none" stroke="#e02020" /></svg>
              </RunButton>
              <RunButton $edge="#70e878" $lit $fill="#fff" aria-label="Запись">
                <svg width="26" height="15">
                  <path d="M1 2l3 4 2-4 3 4 2-4 3 4 2-4 3 4 2-4 3 3" fill="none" stroke="#e02020" strokeWidth="1.300" />
                  <path d="M1 10l3 2 2-3 3 4 2-3 3 3 2-4 3 3 2-3 3 3" fill="none" stroke="#2030e0" strokeWidth="1.300" />
                </svg>
              </RunButton>
              <RunButton $edge="#406080" $span={2}>
                <svg width="8" height="14"><path d="M0 0v14l8-7z" fill="#10e010" /></svg>
                Пуск
              </RunButton>
              <Ratio>1.53</Ratio>
            </RunGrid>
          </Group>
        </Panels>
      </Controls>

      <Status>
        <Cell $width={141}>USB Осциллограф не подключен</Cell>
        <Cell />
        <Cell $width={32}>1.4</Cell>
      </Status>
      <BottomEdge />
    </Window>
  );
}
